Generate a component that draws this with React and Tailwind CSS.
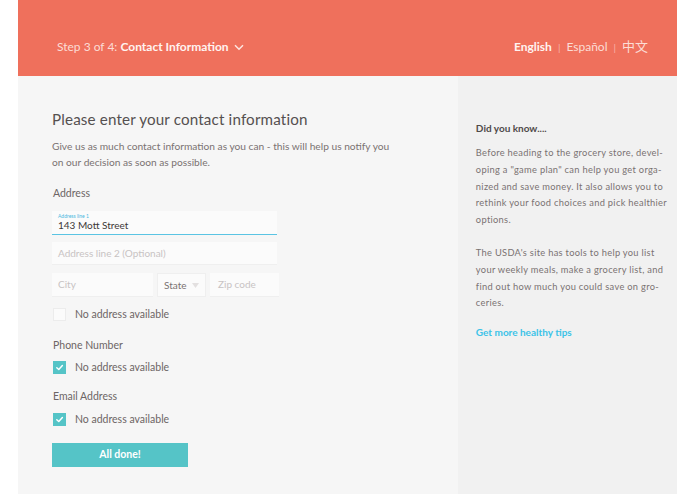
import React from "react";

function Check({ checked }) {
  return checked ? (
    <div className="w-[13px] h-[13px] bg-[#55c4c7] flex items-center justify-center">
      <svg width="9" height="9" viewBox="0 0 10 10" fill="none">
        <path d="M2 5.2 L4.2 7.3 L8.2 2.8" stroke="white" strokeWidth="1.6" strokeLinecap="round" strokeLinejoin="round" />
      </svg>
    </div>
  ) : (
    <div className="w-[13px] h-[13px] bg-[#fbfbfb] border border-[#ececec]" />
  );
}

function CheckRow({ checked, className }) {
  return (
    <div className={"flex items-center gap-[9px] " + className}>
      <Check checked={checked} />
      <span className="text-[10.5px] text-[#6d6565]">No address available</span>
    </div>
  );
}

export default function App() {
  return (
    <div className="w-[695px] h-[494px] bg-white overflow-hidden" style={{ fontFamily: "Lato, 'Noto Sans CJK SC', sans-serif" }}>
      <div className="ml-[18px] w-[659px] h-[494px] flex flex-col">
        <div className="h-[76px] bg-[#ef705c] flex items-center justify-between pl-[39px] pr-[29px] pt-[18px] shrink-0">
          <div className="flex items-center text-[12px] text-[#fcdcd5]">
            <span>Step 3 of 4:&nbsp;</span>
            <span className="font-bold text-[#fff3f0]">Contact Information</span>
            <svg className="ml-[5px]" width="10" height="7" viewBox="0 0 10 7" fill="none">
              <path d="M1 1.2 L5 5.2 L9 1.2" stroke="#fde6e1" strokeWidth="1.5" />
            </svg>
          </div>
          <div className="flex items-center text-[12px] text-[#fcdcd5]">
            <span className="font-bold text-[#fff3f0]">English</span>
            <span className="mx-[6px] text-[10px] text-[#f8b5a9]">|</span>
            <span>Español</span>
            <span className="mx-[6px] text-[10px] text-[#f8b5a9]">|</span>
            <span className="text-[13px]">中文</span>
          </div>
        </div>
        <div className="flex flex-1">
          <div className="w-[441px] bg-[#f6f6f6] pl-[34px] pt-[33px]">
            <h1 className="text-[15.2px] leading-[20px] text-[#555050] font-normal tracking-[0.15px]">Please enter your contact information</h1>
            <p className="mt-[9px] text-[10.2px] leading-[16px] text-[#7a7272] w-[342px]">
              Give us as much contact information as you can - this will help us notify you on our decision as soon as possible.
            </p>
            <div className="mt-[16px] ml-[1px] text-[10.5px] text-[#6d6565] leading-[14px]">Address</div>
            <div className="mt-[11px] w-[225px] h-[24px] bg-[#fbfbfb] border-b border-[#5ac4e3] pl-[6px] pt-[2px]">
              <div className="text-[5px] leading-[6px] text-[#4ab8e0]">Address line 1</div>
              <div className="text-[10px] leading-[12px] text-[#3d3838]">143 Mott Street</div>
            </div>
            <div className="mt-[7px] w-[225px] h-[23px] bg-[#fbfbfb] border-b border-[#efefef] pl-[6px] flex items-center text-[10px] text-[#c8c3c3]">
              Address line 2 (Optional)
            </div>
            <div className="mt-[8px] flex gap-[4px] h-[24px]">
              <div className="w-[101px] bg-[#fbfbfb] border-b border-[#efefef] pl-[6px] flex items-center text-[10px] text-[#c8c3c3]">City</div>
              <div className="w-[49px] bg-[#fbfbfb] border border-[#efefef] pl-[6px] flex items-center text-[10px] text-[#7a7272]">
                State
                <svg className="ml-[5px]" width="7" height="5" viewBox="0 0 7 5">
                  <path d="M0 0 H7 L3.5 5 Z" fill="#e3e0e0" />
                </svg>
              </div>
              <div className="w-[69px] bg-[#fbfbfb] border-b border-[#efefef] pl-[8px] flex items-center text-[10px] text-[#c8c3c3]">Zip code</div>
            </div>
            <CheckRow className="mt-[10px] ml-[1px]" checked={false} />
            <div className="mt-[15px] ml-[1px] text-[10.5px] text-[#6d6565] leading-[14px]">Phone Number</div>
            <CheckRow className="mt-[8px] ml-[1px]" checked />
            <div className="mt-[13px] ml-[1px] text-[10.5px] text-[#6d6565] leading-[14px]">Email Address</div>
            <CheckRow className="mt-[9px] ml-[1px]" checked />
            <button className="mt-[16px] w-[136px] h-[24px] bg-[#55c4c7] text-white text-[10.5px] font-bold flex items-center justify-center">
              All done!
            </button>
          </div>
          <div className="flex-1 bg-[#f1f1f1] pl-[18px] pr-[10px] pt-[45px]">
            <div className="text-[10px] font-bold text-[#4f4a4a] leading-[14px]">Did you know....</div>
            <p className="mt-[10px] text-[9.3px] leading-[16.8px] text-[#7a7272] tracking-[0.3px] whitespace-nowrap">
              Before heading to the grocery store, devel-<br />
              oping a "game plan" can help you get orga-<br />
              nized and save money. It also allows you to<br />
              rethink your food choices and pick healthier<br />
              options.
            </p>
            <p className="mt-[16px] text-[9.3px] leading-[16.8px] text-[#7a7272] tracking-[0.3px] whitespace-nowrap">
              The USDA's site has tools to help you list<br />
              your weekly meals, make a grocery list, and<br />
              find out how much you could save on gro-<br />
              ceries.
            </p>
            <div className="mt-[13px] text-[10px] font-bold text-[#3cc3e8]">Get more healthy tips</div>
          </div>
        </div>
      </div>
    </div>
  );
}
